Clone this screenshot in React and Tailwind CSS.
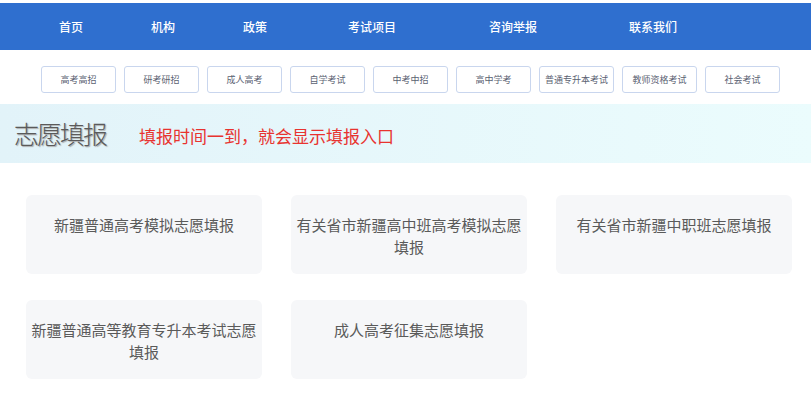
import { memo } from 'react';

const NAV = [
    { label: '首页', w: 'w-[92px]' },
    { label: '机构', w: 'w-[92px]' },
    { label: '政策', w: 'w-[92px]' },
    { label: '考试项目', w: 'w-[142px]' },
    { label: '咨询举报', w: 'w-[140px]' },
    { label: '联系我们', w: 'w-[140px]' },
];

const TAGS = [
    '高考高招',
    '研考研招',
    '成人高考',
    '自学考试',
    '中考中招',
    '高中学考',
    '普通专升本考试',
    '教师资格考试',
    '社会考试',
];

const CARDS = [
    '新疆普通高考模拟志愿填报',
    '有关省市新疆高中班高考模拟志愿填报',
    '有关省市新疆中职班志愿填报',
    '新疆普通高等教育专升本考试志愿填报',
    '成人高考征集志愿填报',
];

const font = {
    fontFamily:
        '"Noto Sans CJK SC", "Microsoft YaHei", "Liberation Sans", sans-serif',
};

const App = () => {
    return (
        <div className="min-h-[393px] w-[811px] bg-white pt-[3px]" style={font}>
            <nav className="flex h-[47px] items-center bg-[#2f6fcf] pl-[25px] text-[12px] font-medium text-white">
                {NAV.map((n) => (
                    <div key={n.label} className={`${n.w} text-center`}>
                        {n.label}
                    </div>
                ))}
            </nav>

            <div className="mt-[16px] flex gap-[8px] pl-[41px]">
                {TAGS.map((t) => (
                    <div
                        key={t}
                        className="flex h-[27px] w-[75px] items-center justify-center rounded-[3px] border border-[#c9d6ee] text-[9px] text-[#5a6272]"
                    >
                        {t}
                    </div>
                ))}
            </div>

            <div className="mt-[11px] flex h-[59px] items-center bg-gradient-to-r from-[#e2f3f9] to-[#ebfcfd] pl-[14px]">
                <h1 className="text-[25px] font-light leading-none tracking-[-2px] text-[#5a5a5a] [text-shadow:1px_1px_1px_#aaa]">
                    志愿填报
                </h1>
                <p className="ml-[33px] mt-[4px] text-[17px] text-[#e8332f]">
                    填报时间一到，就会显示填报入口
                </p>
            </div>

            <div className="mt-[32px] grid grid-cols-[236px_236px_236px] gap-x-[29px] gap-y-[26px] pl-[26px]">
                {CARDS.map((c) => (
                    <div
                        key={c}
                        className="h-[79px] rounded-[6px] bg-[#f6f7f9] px-[4px] pt-[19px] text-center text-[15px] leading-[22px] text-[#5a5a5a]"
                    >
                        {c}
                    </div>
                ))}
            </div>
        </div>
    );
};

export default memo(App);
